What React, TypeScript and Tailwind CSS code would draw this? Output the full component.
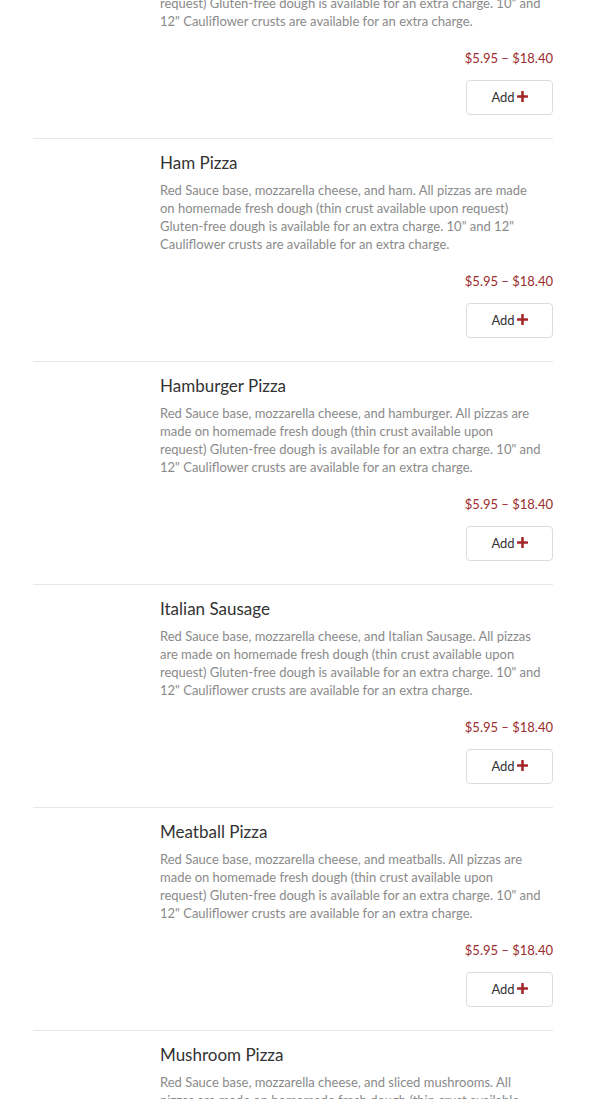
import { Fragment } from "react"

type Pizza = { name: string; lines: string[] }

const pizzas: Pizza[] = [
  {
    name: "Ham Pizza",
    lines: [
      "Red Sauce base, mozzarella cheese, and ham. All pizzas are made",
      "on homemade fresh dough (thin crust available upon request)",
      "Gluten-free dough is available for an extra charge. 10\" and 12\"",
      "Cauliflower crusts are available for an extra charge.",
    ],
  },
  {
    name: "Hamburger Pizza",
    lines: [
      "Red Sauce base, mozzarella cheese, and hamburger. All pizzas are",
      "made on homemade fresh dough (thin crust available upon",
      "request) Gluten-free dough is available for an extra charge. 10\" and",
      "12\" Cauliflower crusts are available for an extra charge.",
    ],
  },
  {
    name: "Italian Sausage",
    lines: [
      "Red Sauce base, mozzarella cheese, and Italian Sausage. All pizzas",
      "are made on homemade fresh dough (thin crust available upon",
      "request) Gluten-free dough is available for an extra charge. 10\" and",
      "12\" Cauliflower crusts are available for an extra charge.",
    ],
  },
  {
    name: "Meatball Pizza",
    lines: [
      "Red Sauce base, mozzarella cheese, and meatballs. All pizzas are",
      "made on homemade fresh dough (thin crust available upon",
      "request) Gluten-free dough is available for an extra charge. 10\" and",
      "12\" Cauliflower crusts are available for an extra charge.",
    ],
  },
  {
    name: "Mushroom Pizza",
    lines: [
      "Red Sauce base, mozzarella cheese, and sliced mushrooms. All",
      "pizzas are made on homemade fresh dough (thin crust available",
      "upon request) Gluten-free dough is available for an extra charge.",
      "10\" and 12\" Cauliflower crusts are available for an extra charge.",
    ],
  },
]

const first: Pizza = {
  name: "Cheese Pizza",
  lines: [
    "Red Sauce base and mozzarella cheese. All pizzas are made on",
    "homemade fresh dough (thin crust available upon",
    "request) Gluten-free dough is available for an extra charge. 10\" and",
    "12\" Cauliflower crusts are available for an extra charge.",
  ],
}

function PlusIcon() {
  return (
    <svg width="11" height="11" viewBox="0 0 12 12" className="ml-[2px] mb-[3px]">
      <rect x="4.6" y="0" width="2.8" height="12" rx="0.6" fill="#a3262a" />
      <rect x="0" y="4.6" width="12" height="2.8" rx="0.6" fill="#a3262a" />
    </svg>
  )
}

function Item({ pizza }: { pizza: Pizza }) {
  return (
    <div className="flex border-b border-[#e8e8e8] h-[223px]">
      <div className="w-[127px] shrink-0" />
      <div className="flex-1 pt-[13px]">
        <h3 className="text-[17px] leading-[22px] text-[#333]">{pizza.name}</h3>
        <p className="mt-[7px] text-[13px] leading-[18px] text-[#8a8a8a]">
          {pizza.lines.map((l, i) => (
            <Fragment key={i}>
              <span className="block whitespace-nowrap">{l}</span>
            </Fragment>
          ))}
        </p>
        <div className="mt-[19px] text-right text-[13px] leading-[18px] text-[#9b2c2c]">$5.95 – $18.40</div>
        <div className="mt-[13px] flex justify-end">
          <button className="w-[87px] h-[35px] rounded-[4px] border border-[#dcdcdc] bg-white flex items-center justify-center text-[13px] text-[#333]">
            Add
            <PlusIcon />
          </button>
        </div>
      </div>
    </div>
  )
}

export default function App() {
  return (
    <div className="w-[590px] h-[1099px] overflow-hidden bg-white font-['Lato',sans-serif]">
      <div className="ml-[33px] w-[520px] mt-[-84px]">
        <Item pizza={first} />
        {pizzas.map(p => (
          <Item key={p.name} pizza={p} />
        ))}
      </div>
    </div>
  )
}
